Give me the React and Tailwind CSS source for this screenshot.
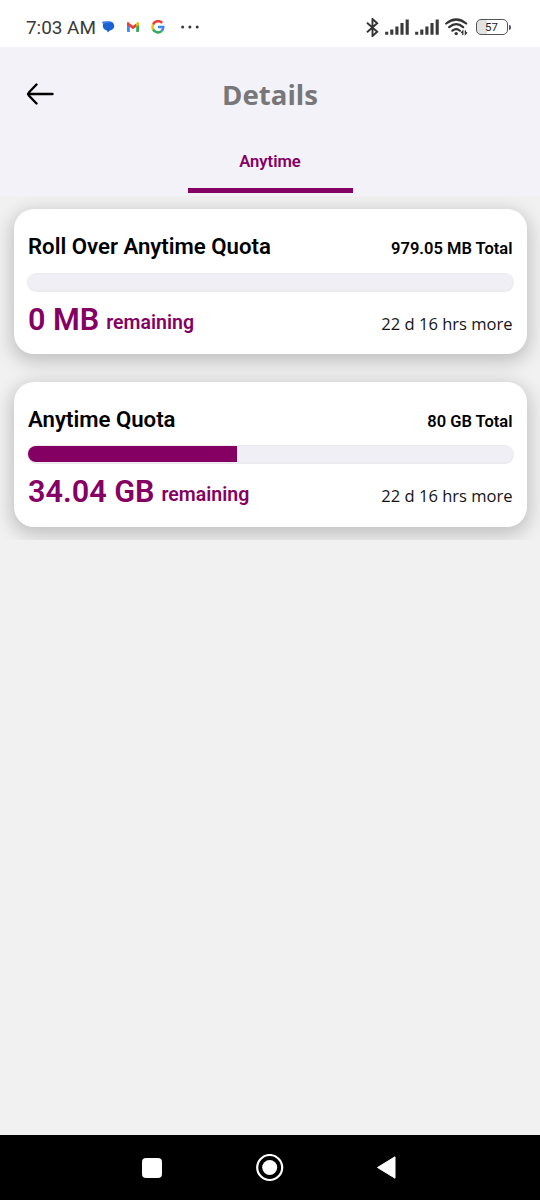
const quotas = [
  { name: "Roll Over Anytime Quota", total: "979.05 MB Total", left: "0 MB", expiry: "22 d 16 hrs more", percent: 0 },
  { name: "Anytime Quota", total: "80 GB Total", left: "34.04 GB", expiry: "22 d 16 hrs more", percent: 43.1 },
];

function Signal() {
  return (
    <svg width="24" height="16" viewBox="0 0 24 16" fill="none" stroke="#3a3a3a" strokeWidth="3.1">
      <path d="M1.7 12.8v2.9M6.8 10.5v5.2M11.9 7.5v8.2M17 4v11.7M22.2 .5v15.2" />
    </svg>
  );
}

function StatusBar() {
  return (
    <div className="flex h-[47px] shrink-0 items-center bg-white pt-[7px] pl-[26px] font-['Roboto',sans-serif] text-[#3a3a3a]">
      <span className="w-[76px] pt-px text-[18.9px] leading-6 whitespace-nowrap">7:03 AM</span>
      <svg width="13" height="12" viewBox="0 0 13 12">
        <rect x=".8" y=".4" width="11.4" height="9" rx="4.4" fill="#1b63d5" />
        <path d="M0 1Q2 .2 4 .8L3 4H1.2Q1.3 2 0 1ZM4.5 9H8L6 11.5Z" fill="#1b63d5" />
        <path d="M0 1C3 .2 9 0 11 1.6Q5 1.4 1.2 3 .9 2 0 1Z" fill="#3d7fe8" />
      </svg>
      <svg className="ml-3" width="12" height="10" viewBox="0 0 12 10">
        <path d="M0 1.5 2.8 3v7H1a1 1 0 0 1-1-1Z" fill="#4285f4" />
        <path d="M12 1.5 9.2 3v7H11a1 1 0 0 0 1-1Z" fill="#34a853" />
        <path d="M9.2 1.5 10 .5c1-1 2-.2 2 1v1.2L9.2 5Z" fill="#fbbc04" />
        <path d="M2.8 1.4 6 3.8l3.2-2.4V5L6 7.3 0 2.7V1.5C0 .2 1-.5 2 .6Z" fill="#ea4335" />
      </svg>
      <svg className="ml-3" width="14" height="14" viewBox="0 0 14 14" fill="none" strokeWidth="2.5">
        <path d="M11.2 3A5.4 5.4 0 0 0 2.1 4.6" stroke="#ea4335" />
        <path d="M2.1 4.6a5.4 5.4 0 0 0 0 4.8" stroke="#fbbc04" />
        <path d="M2.1 9.4a5.4 5.4 0 0 0 8.4 1.7" stroke="#34a853" />
        <path d="M10.5 11.1A5.3 5.3 0 0 0 12.3 7.1H7" stroke="#4285f4" />
      </svg>
      <svg className="ml-4" width="19" height="4" viewBox="0 0 19 4" fill="#3a3a3a">
        <circle cx="1.6" cy="2" r="1.5" /><circle cx="8.9" cy="2" r="1.5" /><circle cx="16.2" cy="2" r="1.5" />
      </svg>
      <div className="ml-auto flex items-center pr-[29.5px]">
        <svg width="13" height="19" viewBox="0 0 13 19" fill="none" stroke="#333" strokeWidth="1.9">
          <path d="m1 4.8 10.2 8.9L6.5 18V1l4.7 4.2L1 14.2" />
        </svg>
        <div className="ml-[6px] flex gap-[6px]"><Signal /><Signal /></div>
        <svg className="ml-[6px]" width="24" height="18" viewBox="0 0 24 18" fill="none" stroke="#333" strokeWidth="2.2" strokeLinecap="round">
          <path d="M1.2 5.5Q11.2-2.5 21.2 5.5M4.2 9.2Q11.2 3.2 18.2 9.2M7.4 12.7Q11.2 9.4 14.9 12.7" />
          <circle cx="11.2" cy="15.6" r="1.7" fill="#333" stroke="none" />
          <path d="M17.8 16.5v-3.3l-1.2 1.3M20.4 12.8v3.3l1.2-1.3" strokeWidth="1.3" />
        </svg>
        <div className="ml-[7px] flex h-4 w-8 items-center justify-center rounded-[5px] border-[1.5px] border-[#555] bg-[linear-gradient(90deg,#e2e2e2_33%,#fff_33%)] pt-px text-[11.5px] leading-none text-[#222]">57</div>
        <div className="ml-px h-[5px] w-[2px] rounded-r bg-[#555]" />
      </div>
    </div>
  );
}

function QuotaCard({ quota }) {
  return (
    <section className="h-[145px] rounded-[20px] bg-white px-[13px] shadow-[0_5px_18px_3px_rgba(0,0,0,0.2)]">
      <div className="flex h-[63.5px] items-start justify-between px-[1.5px] pt-[24.4px] font-['Roboto',sans-serif] text-black">
        <h2 className="text-[22.2px] leading-[26px] font-semibold">{quota.name}</h2>
        <span className="-mr-[0.5px] pt-[6.1px] text-[16.5px] leading-5 font-semibold">{quota.total}</span>
      </div>
      <div className="h-[19px] rounded-full bg-[#ebebed] p-px pb-[2px]">
        <div className="h-full overflow-hidden rounded-full bg-[#f0eff5]">
          <div className="h-full bg-[#850063]" style={{ width: `${quota.percent}%` }} />
        </div>
      </div>
      <div className="flex justify-between px-[1.5px] pt-[10px]">
        <div className="flex items-start gap-[7px] font-['Roboto',sans-serif] text-[#850063]">
          <span className="text-[30.6px] leading-9 font-semibold">{quota.left}</span>
          <span className="pt-[9px] text-[19.5px] leading-6 font-semibold">remaining</span>
        </div>
        <span className="-mr-[0.5px] pt-[10px] font-['Open_Sans',sans-serif] text-[16.55px] leading-6 text-[#151515]">{quota.expiry}</span>
      </div>
    </section>
  );
}

export default function App() {
  return (
    <main className="flex h-[1200px] w-[540px] flex-col overflow-hidden bg-[#f1f1f1]">
      <StatusBar />
      <header className="flex h-[149px] shrink-0 flex-col bg-[#f3f2f8]">
        <div className="grid h-[93px] grid-cols-[1fr_auto_1fr] items-center px-[26px]">
          <svg className="mt-px" width="28" height="22" viewBox="0 0 28 22" fill="none" stroke="#000" strokeWidth="2.4" strokeLinecap="round" strokeLinejoin="round">
            <path d="M26.5 11H2M10.5 1.5 3.3 9Q1.5 11 3.3 13L10.5 20.5" />
          </svg>
          <h1 className="font-['Open_Sans',sans-serif] text-[27.6px] leading-9 font-bold text-[#77777a]">Details</h1>
        </div>
        <div className="mx-auto flex h-[53px] w-[165px] flex-col items-center justify-between font-['Roboto',sans-serif] text-[#850063]">
          <span className="pt-[11.5px] text-[16.6px] leading-5 font-semibold">Anytime</span>
          <span className="h-[5px] w-full bg-[#850063]" />
        </div>
      </header>
      <div className="flex h-[344px] shrink-0 flex-col gap-[27.5px] overflow-hidden px-[13.5px] pt-[13px]">
        {quotas.map((quota) => <QuotaCard key={quota.name} quota={quota} />)}
      </div>
      <nav className="mt-auto flex h-[65px] shrink-0 items-center justify-between bg-black pr-[144px] pl-[142px]">
        <span className="size-5 rounded-[4px] bg-white" />
        <svg className="ml-px" width="28" height="28" viewBox="0 0 28 28" fill="none" stroke="#fff" strokeWidth="2.2">
          <circle cx="13.7" cy="13.5" r="12.5" /><circle cx="13.7" cy="13.5" r="7.5" fill="#fff" stroke="none" />
        </svg>
        <svg width="20" height="24" viewBox="0 0 20 24" fill="#fff" stroke="#fff" strokeWidth="1" strokeLinejoin="round">
          <path d="M1.5 11.5 19 .8v21.4Z" />
        </svg>
      </nav>
    </main>
  );
}
